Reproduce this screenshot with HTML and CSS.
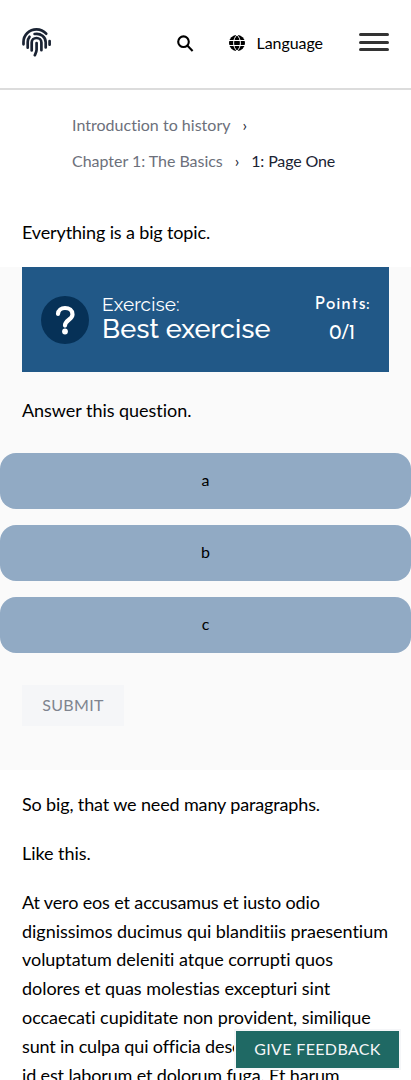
FILE: index.html
```html
<!DOCTYPE html>
<html lang="en">
<head>
<meta charset="utf-8">
<meta name="viewport" content="width=device-width, initial-scale=1">
<title>1: Page One</title>
<link rel="stylesheet" href="styles.css">
</head>
<body>
<header class="header">
  <a class="logo" aria-label="Home"><svg width="30" height="30" viewBox="0 0 30 30" fill="none" stroke="#1a2333" stroke-width="2.7" stroke-linecap="round">
    <path d="M1.500 16.300v-2.300C1.500 6.900 7.400 1.400 14.500 1.400c4 0 7.300 1.700 9.700 4.300M27.600 13v3.700M12.600 6c6.200-1.200 11.100 3 11.100 8.300v5.100M5.700 19.700v-5.700c0-2 .6-3.800 1.800-5.200M9.700 22.500v-7.900c0-2.800 2.100-4.600 4.800-4.600s4.900 1.800 4.900 4.600v7.600M14.600 15v6.700c0 1.800-.9 3.400-1.800 5.500"/>
  </svg></a>
  <button class="search" aria-label="Search"><svg width="17" height="17" viewBox="0 0 17 17" fill="none" stroke="#000" stroke-width="2.1"><circle cx="6.500" cy="6.700" r="5.300"/><path d="M10.300 10.500l5.300 5.400"/></svg></button>
  <button class="language"><svg width="16" height="16" viewBox="0 0 16 16"><circle cx="8" cy="8" r="8"/><path d="M0 5.500h16M0 10.500h16M8 0C3.500 4 3.500 12 8 16M8 0c4.500 4 4.500 12 0 16" fill="none" stroke="#fff" stroke-width="1"/></svg><span>Language</span></button>
  <button class="menu" aria-label="Menu"><i></i><i></i><i></i></button>
</header>
<nav class="breadcrumbs">
  <div class="crumb-row"><a class="course">Introduction to history</a><span>›</span></div>
  <div class="crumb-row"><a>Chapter 1: The Basics</a><span>›</span><b>1: Page One</b></div>
</nav>
<main>
  <p class="text">Everything is a big topic.</p>
  <section class="exercise">
    <div class="exercise-header">
      <svg class="question" width="48" height="48" viewBox="0 0 48 48" fill="none"><circle cx="24" cy="24" r="24" fill="#063157"/><path d="M17 17.800c.3-3.600 3.200-5.800 7-5.800 4.200 0 7.500 2.500 7.500 6.400 0 5.200-7.500 5.600-7.500 11.200" stroke="#fff" stroke-width="4.200" stroke-linecap="round"/><circle cx="24" cy="35.500" r="2.900" fill="#fff"/></svg>
      <h2 class="title"><span class="kind">Exercise:</span><span class="name">Best exercise</span></h2>
      <div class="points"><span class="points-label">Points:</span><span class="points-value">0/1</span></div>
    </div>
    <p class="text loose">Answer this question.</p>
    <div class="options"><button>a</button><button>b</button><button>c</button></div>
    <button class="submit" disabled>SUBMIT</button>
  </section>
  <p class="text">So big, that we need many paragraphs.</p>
  <p class="text loose">Like this.</p>
  <p class="text long">At vero eos et accusamus et iusto odio<br><span class="loose">dignissimos ducimus qui blanditiis praesentium<br>voluptatum deleniti atque corrupti quos<br>dolores et quas molestias excepturi sint<br>occaecati cupiditate non provident, similique<br></span>sunt in culpa qui officia deserunt<br>id est laborum et dolorum fuga. Et harum</p>
</main>
<button class="feedback">GIVE FEEDBACK</button>
</body>
</html>
```
FILE: styles.css
```css
* { box-sizing: border-box; }
html { overflow: hidden; }
body { margin: 0; height: 1080px; overflow: hidden; background: #fff; color: #000; font-family: Lato, sans-serif; font-size: 18px; line-height: 28.8px; font-variant-ligatures: none; }
button { font: inherit; border: 0; padding: 0; background: none; color: inherit; }
.header { display: flex; align-items: center; height: 90px; padding: 0 22px; border-bottom: 2px solid #dcdcdc; }
.logo { display: flex; margin-right: auto; padding-bottom: 3px; }
.search, .language { display: flex; align-items: center; padding-bottom: 2px; }
.search { margin-right: 35px; }
.language { gap: 11px; margin-right: 36px; font-size: 16px; letter-spacing: -.05px; }
.language span { white-space: nowrap; }
.menu { display: flex; flex-direction: column; gap: 4.5px; width: 30px; padding-bottom: 4px; }
.menu i { height: 3px; border-radius: 2px; background: #333; }
.breadcrumbs { height: 128px; padding: 17px 72px 0; font-size: 16px; letter-spacing: -.03px; color: #6c707b; }
.course { letter-spacing: .02px; }
.crumb-row { display: flex; align-items: center; height: 36px; white-space: nowrap; }
.crumb-row span { margin: 0 12px; color: #1a2333; }
.crumb-row b { font-weight: 400; letter-spacing: -.15px; color: #1a2333; }
.text { margin: 0 0 20px; padding: 0 22px; letter-spacing: -.14px; white-space: nowrap; }
.text.loose, .loose { letter-spacing: -.04px; }
.long { padding-top: .5px; }
.exercise { height: 503px; margin-bottom: 20px; background: #fafafa; }
.exercise-header { display: flex; align-items: center; height: 105px; margin: 0 22px 24px; padding: 0 19px; background: #215887; color: #fff; }
.question { flex: none; margin-top: 1px; }
.title { display: flex; flex-direction: column; margin: 0 auto 3px 13px; font-family: Raleway, Lato, sans-serif; font-weight: 500; white-space: nowrap; }
.kind { font-size: 19px; font-weight: 400; line-height: 22px; letter-spacing: .1px; }
.name { font-size: 27px; line-height: 28px; letter-spacing: .05px; }
.points { display: flex; flex-direction: column; align-items: center; font-family: "Josefin Sans", Lato, sans-serif; font-size: 18px; letter-spacing: .5px; }
.points-value { letter-spacing: 0; font-size: 19.5px; padding-top: 1px; margin-bottom: -1px; }
.options { display: flex; flex-direction: column; gap: 16px; margin: 28px 0 32px; }
.options button { height: 56px; border-radius: 16px; background: #91aac4; font-size: 16px; }
.submit { display: block; width: 102px; height: 41px; margin-left: 22px; background: #f5f6f8; color: #7f848f; font-size: 16px; letter-spacing: .3px; }
.feedback { position: fixed; right: 10px; bottom: 10px; width: 167px; height: 41px; border: 2px solid #f5f6f8; background: #1f6964; color: #f5f6f8; font-size: 16px; letter-spacing: .35px; }
```
